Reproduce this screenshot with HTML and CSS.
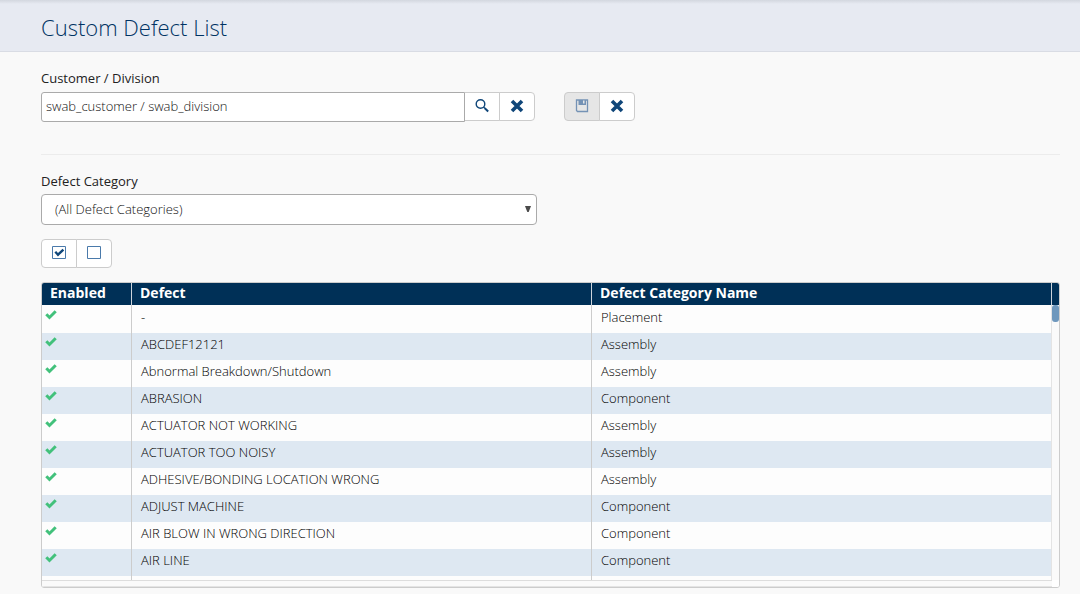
FILE: index.html
```html
<!DOCTYPE html>
<html lang="en">
<head>
<meta charset="utf-8">
<title>Custom Defect List</title>
<link rel="stylesheet" href="styles.css">
</head>
<body>
<header class="page-header"><h1 class="page-title">Custom Defect List</h1></header>
<main class="content">
  <section class="customer">
    <label class="label" for="customer">Customer / Division</label>
    <div class="toolbar">
      <div class="lookup">
        <input class="text-input" id="customer" type="text" value="swab_customer / swab_division">
        <div class="button-group attached">
          <button class="icon-button" type="button" aria-label="Search"><svg width="16" height="16" viewBox="0 0 16 16" fill="none" stroke="#0f4679"><circle cx="6.500" cy="6" r="4.300" stroke-width="1.400"/><path d="M9.500 9l1.500 1.500" stroke-width="1.400"/><path d="M10.800 10.300l3.400 3.200" stroke-width="2"/></svg></button>
          <button class="icon-button" type="button" aria-label="Clear"><svg width="16" height="16" viewBox="0 0 16 16"><path d="M3 3l10 10M13 3L3 13" stroke="#0f4679" stroke-width="3.600"/></svg></button>
        </div>
      </div>
      <div class="button-group">
        <button class="icon-button" type="button" aria-label="Save" disabled><svg width="16" height="16" viewBox="0 0 16 16"><path d="M2.500 2h11v11.500H3.500l-1-1z" fill="none" stroke="#7492b5" stroke-width="1.300"/><path d="M4.500 2h7.500v5h-7.500z" fill="#7492b5"/><path d="M9 2.500h1.500v3H9z" fill="#e6e6e6"/></svg></button>
        <button class="icon-button" type="button" aria-label="Cancel"><svg width="16" height="16" viewBox="0 0 16 16"><path d="M3 3l10 10M13 3L3 13" stroke="#0f4679" stroke-width="3.600"/></svg></button>
      </div>
    </div>
  </section>
  <hr class="divider">
  <section class="category">
    <label class="label" for="category">Defect Category</label>
    <div class="select-wrap">
      <select class="select" id="category"><option>(All Defect Categories)</option></select>
      <svg class="select-arrow" width="6" height="6" viewBox="0 0 6 6" aria-hidden="true"><path d="M0 0h6L3.700 6H2.300z" fill="#4a4a4a"/></svg>
    </div>
  </section>
  <div class="button-group check-actions">
    <button class="icon-button" type="button" aria-label="Check all"><svg width="16" height="16" viewBox="0 0 16 16" fill="none"><path d="M1.500 1.500h13v12h-13z" stroke="#4a7aab"/><path d="M4.300 6.800l2.700 2.900 5.400-5" stroke="#0f4679" stroke-width="2.400"/></svg></button>
    <button class="icon-button" type="button" aria-label="Uncheck all"><svg width="16" height="16" viewBox="0 0 16 16" fill="none"><path d="M1.500 1.500h13v12h-13z" stroke="#4a7aab"/></svg></button>
  </div>
  <div class="grid">
    <div class="grid-view">
      <table class="table">
        <colgroup><col class="col-enabled"><col class="col-defect"><col class="col-name"></colgroup>
        <thead><tr><th scope="col">Enabled</th><th scope="col">Defect</th><th scope="col">Defect Category Name</th></tr></thead>
        <tbody id="rows"></tbody>
      </table>
    </div>
    <div class="v-scroll"><div class="v-head"></div><div class="v-thumb"></div></div>
    <div class="h-scroll"></div>
    <div class="corner"></div>
  </div>
</main>
<script src="grid.js"></script>
</body>
</html>
```
FILE: styles.css
```css
* { box-sizing: border-box; }
body {
  margin: 0;
  background: #f9f9f9;
  color: #222;
  font: 13px/18px "Open Sans", sans-serif;
}
.page-header {
  padding: 13px 41px 10px;
  border-bottom: 1px solid #d9dce4;
  background: linear-gradient(#d3d7df, #e7eaf2 4px);
}
.page-title { margin: 0; color: #003262; font-size: 22px; line-height: 28px; font-weight: 300; }
.content { padding: 17px 20px 6px 41px; }
.label { display: block; margin-bottom: 5px; }
.toolbar { display: flex; gap: 29px; }
.lookup { display: flex; width: 494px; }
.text-input {
  flex: 1;
  min-width: 0;
  height: 30px;
  padding: 0 4px 2px;
  border: 1px solid #aaa;
  border-radius: 3px 0 0 3px;
  background: #fff;
  color: #111;
  font: inherit;
  font-weight: 300;
}
.button-group { display: flex; }
.icon-button {
  display: flex;
  align-items: center;
  justify-content: center;
  width: 36px;
  height: 29px;
  padding: 0 0 2px;
  border: 1px solid #ccc;
  background: #fff;
}
.icon-button + .icon-button { margin-left: -1px; }
.icon-button:first-child { border-radius: 4px 0 0 4px; }
.icon-button:last-child { border-radius: 0 4px 4px 0; }
.attached .icon-button:first-child { width: 35px; border-left: 0; border-radius: 0; }
.icon-button:disabled { background: #e6e6e6; }
.divider { margin: 32px 0 17px; border: 0; border-top: 1px solid #ececec; }
.category .label { margin-bottom: 4px; }
.select-wrap { position: relative; width: 496px; }
.select {
  display: block;
  width: 100%;
  height: 31px;
  padding: 0 13px 2px;
  border: 1px solid #aaa;
  border-radius: 4px;
  appearance: none;
  background: #fff;
  color: #111;
  font: inherit;
  font-weight: 300;
}
.select-arrow { position: absolute; right: 6px; top: 12px; pointer-events: none; }
.check-actions { margin: 14px 0; }
.grid {
  display: grid;
  grid-template-columns: 1fr 7px;
  grid-template-rows: 297px 7px;
  border: 1px solid #ccc;
  border-radius: 3px;
  background: #fdfdfd;
  overflow: hidden;
}
.grid-view { overflow: hidden; }
.table { width: 100%; border-collapse: separate; border-spacing: 0; table-layout: fixed; }
.col-enabled { width: 90px; }
.col-defect { width: 460px; }
.table th {
  height: 22px;
  padding: 0 8px 2px;
  border-right: 1px solid #ccd3db;
  background: #003057;
  color: #fff;
  font-size: 14px;
  line-height: 20px;
  font-weight: 700;
  text-align: left;
}
.table td {
  height: 27px;
  padding: 2px 9px 7px;
  border-right: 1px solid #ccc;
  color: #000;
  font-weight: 300;
}
.table tr:first-child td { height: 28px; padding-top: 3px; }
.table tr:nth-child(even) td { background: #dee8f2; }
.table td:last-child { border-right-color: #e4e4e4; }
.table .enabled { padding: 3px 3px; vertical-align: top; }
.table tr:first-child .enabled { padding-top: 4px; }
.tick { display: block; }
.v-scroll { background: #fafafa; }
.v-head { height: 22px; background: #003057; }
.v-thumb { height: 17px; border-radius: 3px; background: #6f98bd; }
.h-scroll { border-top: 1px solid #ddd; border-bottom: 1px solid #e4e4e4; background: #fafafa; }
.corner { background: #fff; }
```
FILE: grid.js
```javascript
const defects = [
  ["-", "Placement"],
  ["ABCDEF12121", "Assembly"],
  ["Abnormal Breakdown/Shutdown", "Assembly"],
  ["ABRASION", "Component"],
  ["ACTUATOR NOT WORKING", "Assembly"],
  ["ACTUATOR TOO NOISY", "Assembly"],
  ["ADHESIVE/BONDING LOCATION WRONG", "Assembly"],
  ["ADJUST MACHINE", "Component"],
  ["AIR BLOW IN WRONG DIRECTION", "Component"],
  ["AIR LINE", "Component"],
  ["", ""]
];
const tick = '<svg class="tick" role="img" aria-label="Enabled" width="12" height="11" viewBox="0 0 12 11"><path d="M1.300 5.300l3.200 3.200 6.200-6.200" fill="none" stroke="#42c17b" stroke-width="3"/></svg>';
document.getElementById("rows").innerHTML = defects.map(([name, category]) =>
  `<tr><td class="enabled">${name ? tick : ""}</td><td>${name}</td><td>${category}</td></tr>`
).join("");
```
